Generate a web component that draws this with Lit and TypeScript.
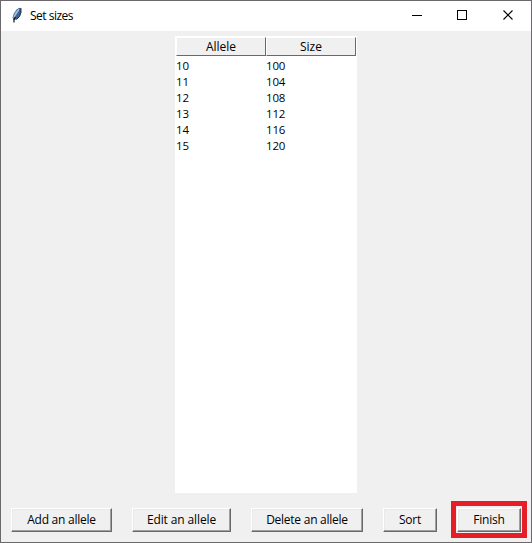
import { LitElement, html, css, svg } from "lit";
import { customElement, property } from "lit/decorators.js";

@customElement("tk-button")
class TkButton extends LitElement {
  @property() label = "";
  static styles = css`
    :host { display: block; height: 24px; }
    button {
      display: block; width: 100%; height: 24px; box-sizing: border-box; margin: 0; padding: 0;
      border-style: solid; border-width: 1px;
      border-color: #fff #696969 #696969 #fff;
      box-shadow: inset -1px -1px 0 #a0a0a0, inset 1px 1px 0 #e9e9e9;
      background: #f0f0f0; color: #000;
      font: 12px/22px "Open Sans", "Noto Sans", sans-serif;
      letter-spacing: var(--tracking, -0.2px); white-space: nowrap;
    }
  `;
  render() {
    return html`<button>${this.label}</button>`;
  }
}

@customElement("allele-table")
class AlleleTable extends LitElement {
  rows = [[10, 100], [11, 104], [12, 108], [13, 112], [14, 116], [15, 120]];
  static styles = css`
    :host {
      display: block; width: 182px; height: 457px; box-sizing: border-box; padding: 1px;
      background: #fff; color: #000;
      font: 12px/16px "Open Sans", "Noto Sans", sans-serif;
    }
    .row { display: grid; grid-template-columns: 90px 90px; }
    .head { margin-bottom: 2px; }
    .head span {
      height: 19px; box-sizing: border-box; text-align: center; line-height: 17px;
      background: #f0f0f0; border-style: solid; border-width: 1px;
      border-color: #fff #696969 #696969 #fff;
    }
    .cell { height: 16px; font-size: 11.5px; letter-spacing: -0.15px; line-height: 15px; }
  `;
  render() {
    return html`
      <div class="row head"><span>Allele</span><span>Size</span></div>
      ${this.rows.map((r) => html`<div class="row">${r.map((v) => html`<div class="cell">${v}</div>`)}</div>`)}
    `;
  }
}

const feather = svg`
  <path d="M10.2 0.8 L12 1.2 L12 5.5 L10.5 9.5 L7.5 12.5 L4.6 13 L3.6 10.5 L4.8 6.5 L7.4 2.8 Z" fill="#3f618f"/>
  <path d="M12 1.2 L12 5.5 L10.5 9.5 L7.5 12.5" fill="none" stroke="#131c2b" stroke-width="0.9"/>
  <path d="M9.8 1.6 L6 5.8 L4.2 10.2 L5 11.6 L7.4 7.4 L10.4 3 Z" fill="#9dc0ea"/>
  <path d="M6.4 10 L5 12.5 L5 15.6" fill="none" stroke="#0c1420" stroke-width="1.2"/>
`;

@customElement("app-root")
class AppRoot extends LitElement {
  static styles = css`
    :host {
      display: flex; flex-direction: column; width: 532px; height: 543px; box-sizing: border-box;
      border: 1px solid #6b696c; background: #f0f0f0; overflow: hidden; position: relative;
    }
    .edge { position: absolute; left: -1px; top: -1px; width: 532px; height: 543px; pointer-events: none; }
    .bar { display: flex; align-items: center; height: 30px; flex: none; background: #fff; }
    .feather { width: 14px; height: 18px; margin-left: 8px; }
    .title { margin-left: 7px; font: 12px/18px "Open Sans", "Noto Sans", sans-serif; letter-spacing: -0.5px; color: #000; }
    .controls { display: flex; margin-left: auto; }
    .controls svg { width: 46px; height: 30px; display: block; }
    .content { display: flex; justify-content: center; padding-top: 5px; height: 472px; box-sizing: border-box; flex: none; }
    .actions { display: flex; height: 34px; margin-left: 10px; align-items: flex-start; padding-top: 5px; box-sizing: border-box; }
    .add { width: 101px; margin-right: 20px; --tracking: -0.25px; }
    .edit { width: 99px; margin-right: 20px; --tracking: -0.12px; }
    .delete { width: 112px; margin-right: 20px; --tracking: -0.25px; }
    .sort { width: 54px; margin-right: 14px; }
    .finish { width: 64px; }
    .marked { border: 5px solid #e61e28; padding: 2px 0 1px 1px; width: 76px; height: 37px; box-sizing: border-box; margin-top: -7px; }
  `;
  render() {
    return html`
      <div class="bar">
        <svg class="feather" viewBox="0 0 14 18">${feather}</svg>
        <div class="title">Set sizes</div>
        <div class="controls">
          <svg viewBox="0 0 46 30" stroke="#000" fill="none" shape-rendering="crispEdges"><path d="M19 14.5h10"/></svg>
          <svg viewBox="0 0 46 30" stroke="#000" fill="none" shape-rendering="crispEdges"><rect x="18.5" y="9.5" width="9" height="9"/></svg>
          <svg viewBox="0 0 46 30" stroke="#000" fill="none"><path d="M18.5 9.5l9 9M27.5 9.5l-9 9" stroke-width="1.1"/></svg>
        </div>
      </div>
      <div class="content"><allele-table></allele-table></div>
      <div class="actions">
        <tk-button class="add" label="Add an allele"></tk-button>
        <tk-button class="edit" label="Edit an allele"></tk-button>
        <tk-button class="delete" label="Delete an allele"></tk-button>
        <tk-button class="sort" label="Sort"></tk-button>
        <div class="marked"><tk-button class="finish" label="Finish"></tk-button></div>
      </div>
      <svg class="edge" viewBox="0 0 532 543" fill="none" stroke="#2a2440" shape-rendering="crispEdges">
        <path d="M.5 104v13M.5 123v1M.5 139v4M.5 148v1M.5 205v2M.5 221v2M.5 364v1M.5 367v6M.5 33v2"/>
        <path d="M2 .5h8M28 .5h6M54 .5h4M72 .5h6M144 .5h3M148 .5h2M153 .5h3M158 .5h3M165 .5h2M170 .5h4M178 .5h3M184 .5h4M297 .5h1M310 .5h1M325 .5h1M334 .5h1M348 .5h1M367 .5h1M379 .5h1"/>
      </svg>
    `;
  }
}
